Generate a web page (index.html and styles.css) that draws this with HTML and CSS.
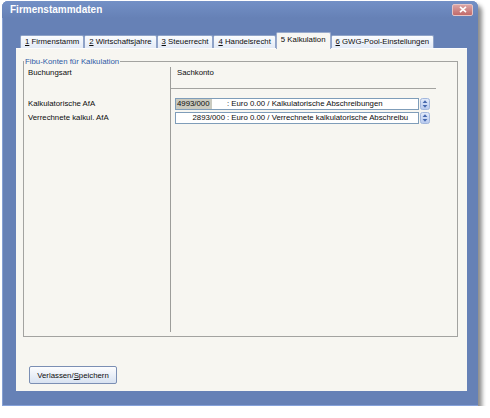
FILE: index.html
```html
<!DOCTYPE html>
<html lang="de">
<head>
<meta charset="utf-8">
<title>Firmenstammdaten</title>
<link rel="stylesheet" href="styles.css">
</head>
<body>
<div class="window">
  <div class="titlebar">
    <span class="title">Firmenstammdaten</span>
    <span class="close"><svg width="8" height="7" viewBox="0 0 8 7"><path d="M1 0.8 L7 6.2 M7 0.8 L1 6.2" stroke="#fff" stroke-width="1.6" fill="none"/></svg></span>
  </div>
  <div class="tabstrip">
    <div class="tab"><u>1</u> Firmenstamm</div>
    <div class="tab"><u>2</u> Wirtschaftsjahre</div>
    <div class="tab"><u>3</u> Steuerrecht</div>
    <div class="tab"><u>4</u> Handelsrecht</div>
    <div class="tab active">5 Kalkulation</div>
    <div class="tab"><u>6</u> GWG-Pool-Einstellungen</div>
  </div>
  <div class="panel">
    <fieldset class="group">
      <legend>Fibu-Konten für Kalkulation</legend>
      <div class="cols">
        <div class="col-left">
          <div class="head">Buchungsart</div>
          <div class="rows">
            <div class="row">Kalkulatorische AfA</div>
            <div class="row">Verrechnete kalkul. AfA</div>
          </div>
        </div>
        <div class="col-right">
          <div class="head">Sachkonto</div>
          <div class="rows">
            <div class="row">
              <div class="field"><span class="code"><span class="sel">4993/000</span></span><span class="desc">: Euro 0.00 / Kalkulatorische Abschreibungen</span></div>
              <svg class="spin" width="10" height="12" viewBox="0 0 10 12"><defs><linearGradient id="sg1" x1="0" y1="0" x2="0" y2="1"><stop offset="0" stop-color="#e3ebfa"/><stop offset="1" stop-color="#b7c9ee"/></linearGradient></defs><rect x="0.5" y="0.5" width="9" height="11" rx="2" fill="url(#sg1)" stroke="#a3b7dc"/><path d="M5 2.2 L7.4 4.9 L2.6 4.9 Z M2.6 7.1 L7.4 7.1 L5 9.8 Z" fill="#4668ae"/></svg>
            </div>
            <div class="row">
              <div class="field"><span class="code right">2893/000</span><span class="desc">: Euro 0.00 / Verrechnete kalkulatorische Abschreibu</span></div>
              <svg class="spin" width="10" height="12" viewBox="0 0 10 12"><defs><linearGradient id="sg2" x1="0" y1="0" x2="0" y2="1"><stop offset="0" stop-color="#e3ebfa"/><stop offset="1" stop-color="#b7c9ee"/></linearGradient></defs><rect x="0.5" y="0.5" width="9" height="11" rx="2" fill="url(#sg2)" stroke="#a3b7dc"/><path d="M5 2.2 L7.4 4.9 L2.6 4.9 Z M2.6 7.1 L7.4 7.1 L5 9.8 Z" fill="#4668ae"/></svg>
            </div>
          </div>
        </div>
      </div>
    </fieldset>
    <button class="btn" type="button">Verlassen/<u>S</u>peichern</button>
  </div>
</div>
</body>
</html>
```
FILE: styles.css
```css
body {
  margin: 0;
  background: #ffffff;
  font-family: "Liberation Sans", Arial, sans-serif;
  font-size: 7.8px;
  color: #0c0c0c;
}

.window {
  margin: 1px 0 0 2px;
  width: 476px;
  height: 405px;
  box-sizing: border-box;
  background: #6681b6;
  border-radius: 6px 6px 0 0;
  border-bottom: 1px solid #86a2da;
  padding: 0 11px 14px 14px;
  display: flex;
  flex-direction: column;
  box-shadow: inset 1px 1px 0 #86a0d2, 4px 4px 4px rgba(0, 0, 0, 0.45);
}

.titlebar {
  height: 17px;
  margin: 0 -11px 0 -14px;
  padding: 0 5px 0 8px;
  display: flex;
  align-items: center;
  justify-content: space-between;
  border-radius: 6px 6px 0 0;
  background: linear-gradient(#7390c6, #6681b6);
}

.title {
  color: #ffffff;
  font-weight: bold;
  font-size: 10px;
}

.close {
  width: 21px;
  height: 12px;
  box-sizing: border-box;
  border: 1px solid #e6c4c4;
  border-radius: 2px;
  background: linear-gradient(#dba4a4, #c16a6a);
  display: flex;
  align-items: center;
  justify-content: center;
}

.tabstrip {
  height: 30px;
  display: flex;
  align-items: flex-end;
  padding-left: 4px;
  position: relative;
  z-index: 1;
}

.tab {
  height: 13px;
  box-sizing: border-box;
  padding: 0 4px;
  border: 1px solid #8fa3c8;
  border-bottom: none;
  border-radius: 2px 2px 0 0;
  background: linear-gradient(#fbfcfe, #e3eaf6);
  line-height: 12px;
  white-space: nowrap;
}

.tab.active {
  height: 17px;
  margin-bottom: -1px;
  background: #f8f7f3;
  line-height: 14px;
  border-color: #9aabcc;
}

.panel {
  flex: 1;
  background: #f7f6f1;
  border-top: 1px solid #fcfcfc;
  padding: 7px 9px 7px 7px;
  display: flex;
  flex-direction: column;
}

.group {
  flex: 1;
  margin: 0;
  padding: 0;
  min-width: 0;
  border: 1px solid #a3a3a0;
  display: flex;
  flex-direction: column;
}

.group legend {
  padding: 0 1px;
  margin-left: 0;
  line-height: 11px;
  color: #2f5aa6;
}

.cols {
  flex: 1;
  display: flex;
}

.col-left {
  width: 146px;
}

.col-right {
  flex: 1;
  margin: 0 21px 4px 0;
  border-left: 1px solid #9d9d9a;
}

.head {
  line-height: 10px;
  padding: 1px 0 11px 4px;
}

.col-right .head {
  padding: 1px 0 10px 6px;
  border-bottom: 1px solid #a3a3a0;
}

.rows {
  padding: 9px 0 0 4px;
}

.row {
  height: 12px;
  margin-bottom: 2px;
  line-height: 12px;
  display: flex;
  white-space: nowrap;
}

.field {
  width: 244px;
  height: 12px;
  box-sizing: border-box;
  border: 1px solid #7f9db9;
  background: #ffffff;
  display: flex;
  line-height: 10px;
  overflow: hidden;
  white-space: nowrap;
}

.code {
  width: 49px;
  flex: none;
}

.code.right {
  text-align: right;
}

.sel {
  display: inline-block;
  width: 36px;
  padding-left: 1px;
  box-sizing: border-box;
  background: #cacabf;
}

.desc {
  padding-left: 2px;
}

.spin {
  margin-left: 1px;
  flex: none;
}

.btn {
  margin: 29px 0 0 6px;
  align-self: flex-start;
  width: 88px;
  height: 18px;
  padding: 0;
  font: inherit;
  color: #0c0c0c;
  border: 1px solid #7b8fb4;
  border-radius: 2px;
  background: linear-gradient(#fdfdfe, #d8e2f1);
}
```
